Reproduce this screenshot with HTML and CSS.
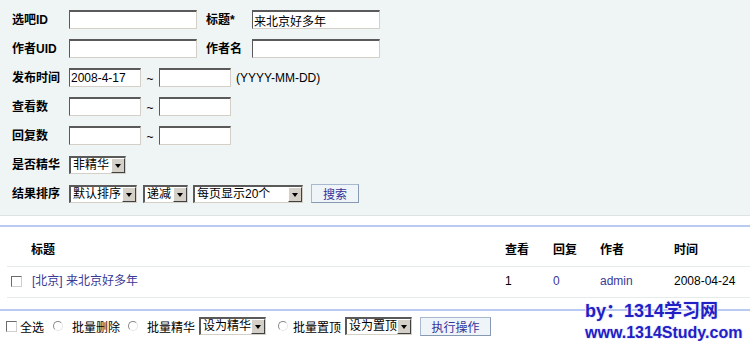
FILE: index.html
```html
<!DOCTYPE html>
<html lang="zh-CN">

<head>
    <meta charset="UTF-8">
    <title>帖子搜索</title>
    <link rel="stylesheet" href="styles.css">
</head>

<body>
    <form class="search" id="searchForm">
        <div class="row">
            <label class="lbl" for="forum_id">选吧ID</label>
            <input class="txt txt-wide" type="text" id="forum_id">
            <label class="lbl lbl-2" for="title">标题*</label>
            <input class="txt txt-wide" type="text" id="title" value="来北京好多年">
        </div>
        <div class="row">
            <label class="lbl" for="uid">作者UID</label>
            <input class="txt txt-wide" type="text" id="uid">
            <label class="lbl lbl-2" for="author">作者名</label>
            <input class="txt txt-wide" type="text" id="author">
        </div>
        <div class="row">
            <label class="lbl" for="date_from">发布时间</label>
            <input class="txt txt-short" type="text" id="date_from" value="2008-4-17">
            <span class="tilde">~</span>
            <input class="txt txt-short" type="text" id="date_to">
            <span class="hint">(YYYY-MM-DD)</span>
        </div>
        <div class="row">
            <label class="lbl" for="views_from">查看数</label>
            <input class="txt txt-short" type="text" id="views_from">
            <span class="tilde">~</span>
            <input class="txt txt-short" type="text" id="views_to">
        </div>
        <div class="row">
            <label class="lbl" for="replies_from">回复数</label>
            <input class="txt txt-short" type="text" id="replies_from">
            <span class="tilde">~</span>
            <input class="txt txt-short" type="text" id="replies_to">
        </div>
        <div class="row">
            <label class="lbl" for="digest">是否精华</label>
            <span class="sel sel-digest">
                <select id="digest">
                    <option>非精华</option>
                    <option>精华</option>
                </select>
            </span>
        </div>
        <div class="row">
            <label class="lbl" for="order">结果排序</label>
            <span class="sel sel-order">
                <select id="order">
                    <option>默认排序</option>
                </select>
            </span>
            <span class="sel sel-dir">
                <select>
                    <option>递减</option>
                    <option>递增</option>
                </select>
            </span>
            <span class="sel sel-page">
                <select>
                    <option>每页显示20个</option>
                </select>
            </span>
            <button class="btn btn-search" type="submit">搜索</button>
        </div>
    </form>

    <div class="list">
        <div class="list-head">
            <div class="col-title">标题</div>
            <div>查看</div>
            <div>回复</div>
            <div>作者</div>
            <div>时间</div>
        </div>
        <div class="list-row">
            <div class="col-title">
                <input class="chk chk-row" type="checkbox">
                <span><a href="#">[北京]</a> <a href="#">来北京好多年</a></span>
            </div>
            <div>1</div>
            <div><a href="#">0</a></div>
            <div><a href="#">admin</a></div>
            <div>2008-04-24</div>
        </div>
    </div>

    <div class="actions">
        <label class="opt opt-all"><input class="chk" type="checkbox">全选</label>
        <label class="opt opt-del"><input class="radio" type="radio" name="op">批量删除</label>
        <label class="opt opt-digest"><input class="radio" type="radio" name="op">批量精华</label>
        <span class="sel sel-act">
            <select>
                <option>设为精华</option>
            </select>
        </span>
        <label class="opt opt-top"><input class="radio" type="radio" name="op">批量置顶</label>
        <span class="sel sel-act">
            <select>
                <option>设为置顶</option>
            </select>
        </span>
        <button class="btn btn-run" type="button">执行操作</button>
    </div>

    <div class="mark">
        <div class="mark-1">by：1314学习网</div>
        <div class="mark-2">www.1314Study.com</div>
    </div>
</body>

</html>
```

FILE: styles.css
```css
body {
    margin: 0;
    height: 341px;
    overflow: hidden;
    position: relative;
    background: #fff;
    color: #000;
    font: 12px "Liberation Sans", "Noto Sans CJK SC", sans-serif;
}

a {
    color: #3a3a96;
    text-decoration: none;
}

/* search panel */
.search {
    margin: 0;
    padding: 5px 0 7px 12px;
    background: #eff5f5;
    border-bottom: 1px solid #dde3e3;
}

.row {
    display: flex;
    align-items: center;
    height: 29px;
}

.lbl {
    width: 57px;
    font-weight: bold;
    line-height: 14px;
}

.lbl-2 {
    width: 46px;
    margin-left: 9px;
}

.txt {
    box-sizing: border-box;
    height: 19px;
    margin: 0;
    padding: 0 1px;
    border-style: solid;
    border-width: 2px 1px 1px 1px;
    border-color: #5a5a5a #d4d0c8 #d4d0c8 #5a5a5a;
    background: #fff;
    font: inherit;
    line-height: 14px;
    outline: none;
}

.txt-wide {
    width: 128px;
}

.txt-short {
    width: 72px;
}

.tilde {
    width: 18px;
    text-align: center;
    padding-top: 3px;
}

.hint {
    margin-left: 5px;
}

/* select boxes */
.sel {
    position: relative;
    display: inline-block;
    box-sizing: border-box;
    height: 18px;
    border-style: solid;
    border-width: 2px 1px 1px 2px;
    border-color: #5a5a5a #d4d0c8 #d4d0c8 #5a5a5a;
    background: #fff;
}

.sel select {
    appearance: none;
    -webkit-appearance: none;
    display: block;
    width: 100%;
    height: 15px;
    margin: 0;
    padding: 0 0 0 2px;
    border: 0;
    background: transparent;
    font: inherit;
    line-height: 15px;
    color: #000;
    outline: none;
}

.sel::after {
    content: "";
    position: absolute;
    top: 0;
    right: 0;
    box-sizing: border-box;
    width: 14px;
    height: 15px;
    background: #d4d0c8;
    border-style: solid;
    border-width: 1px;
    border-color: #fff #404040 #404040 #fff;
    pointer-events: none;
}

.sel::before {
    content: "";
    position: absolute;
    top: 6px;
    right: 4px;
    z-index: 1;
    border-left: 3px solid transparent;
    border-right: 3px solid transparent;
    border-top: 4px solid #000;
    pointer-events: none;
}

.sel-digest {
    width: 57px;
}

.sel-order {
    width: 68px;
}

.sel-dir {
    width: 45px;
    margin-left: 6px;
}

.sel-page {
    width: 110px;
    margin-left: 5px;
}

.sel-act {
    width: 67px;
    margin-left: 4px;
}

/* buttons */
.btn {
    box-sizing: border-box;
    height: 19px;
    padding: 0;
    border: 1px solid #a7b8cf;
    border-right-color: #8799b3;
    border-bottom-color: #8799b3;
    background: #eef4f8;
    color: #33339a;
    font: inherit;
    cursor: pointer;
}

.btn-search {
    width: 48px;
    margin-left: 8px;
}

.btn-run {
    width: 71px;
    margin-left: 8px;
}

/* result list */
.list {
    margin-top: 9px;
    border-top: 2px solid #b9c9ef;
}

.list-head,
.list-row {
    display: grid;
    grid-template-columns: 498px 48px 47px 74px 1fr;
    margin-left: 7px;
    line-height: 12px;
    border-bottom: 1px solid #e6ecec;
}

.list-head {
    padding: 17px 0 10px;
    font-weight: bold;
}

.list-head .col-title {
    padding-left: 24px;
}

.list-row {
    padding: 8px 0 10px;
}

.list-row .col-title {
    display: flex;
    align-items: center;
    padding-left: 4px;
}

.chk {
    appearance: none;
    -webkit-appearance: none;
    box-sizing: border-box;
    width: 11px;
    height: 11px;
    margin: 0;
    border: 1px solid;
    border-color: #6a6a6a #cfcfcf #cfcfcf #6a6a6a;
    background: #fff;
}

.chk-row {
    margin-right: 10px;
}

/* bottom actions */
.actions {
    display: flex;
    align-items: center;
    height: 30px;
    margin-top: 11px;
    padding-left: 6px;
    border-top: 2px solid #b9c9ef;
}

.opt {
    display: flex;
    align-items: center;
    gap: 9px;
}

.opt-all {
    gap: 3px;
}

.opt-del {
    margin-left: 9px;
}

.opt-digest {
    margin-left: 8px;
}

.opt-top {
    gap: 5px;
    margin-left: 12px;
}

.radio {
    appearance: none;
    -webkit-appearance: none;
    box-sizing: border-box;
    width: 10px;
    height: 10px;
    margin: 0;
    border: 1px solid;
    border-color: #8a8a8a #e6e6e6 #e6e6e6 #8a8a8a;
    border-radius: 50%;
    background: #fff;
}

/* watermark */
.mark {
    position: absolute;
    left: 585px;
    top: 300px;
    font-weight: bold;
    color: #2020c4;
    white-space: nowrap;
    text-shadow: 1px 0 #eef, -1px 0 #eef, 0 1px #eef, 0 -1px #eef;
}

.mark-1 {
    font-size: 18px;
    line-height: 22px;
    height: 22px;
}

.mark-2 {
    font-size: 16px;
    line-height: 21px;
    height: 21px;
}
```
